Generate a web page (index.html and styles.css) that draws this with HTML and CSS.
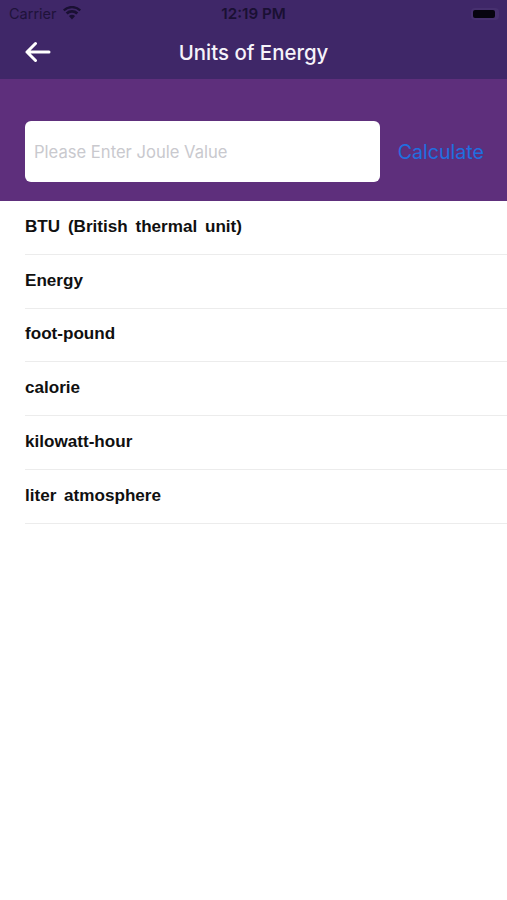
FILE: index.html
```html
<!DOCTYPE html>
<html lang="en">
<head>
<meta charset="utf-8">
<title>Units of Energy</title>
<link rel="stylesheet" href="styles.css">
</head>
<body>
<div class="app">
  <header class="top">
    <div class="status">
      <div class="status-left">
        <span class="carrier">Carrier</span>
        <svg class="wifi" width="18" height="14" viewBox="0 0 18 14"><path d="M9 13.6 L5.9 10.1 A4.6 4.6 0 0 1 12.1 10.1 Z M4.6 8.6 L2.7 6.5 A9.2 9.2 0 0 1 15.3 6.5 L13.4 8.6 A6.4 6.4 0 0 0 4.6 8.6 Z M1.5 5.2 L0 3.5 A13 13 0 0 1 18 3.5 L16.5 5.2 A10.9 10.9 0 0 0 1.5 5.2 Z" fill="#1a1033"/></svg>
      </div>
      <span class="clock">12:19 PM</span>
      <div class="battery"><span class="battery-fill"></span></div>
    </div>
    <div class="nav">
      <svg class="back" width="26" height="22" viewBox="0 0 26 22"><path d="M2 11 H24 M10.5 2.5 L2 11 L10.5 19.5" fill="none" stroke="#fff" stroke-width="3" stroke-linecap="round" stroke-linejoin="round"/></svg>
      <h1 class="title">Units of Energy</h1>
      <span class="nav-spacer"></span>
    </div>
  </header>
  <section class="entry">
    <div class="field">Please Enter Joule Value</div>
    <span class="calc">Calculate</span>
  </section>
  <ul class="list">
    <li class="row"><span class="row-text">BTU (British thermal unit)</span></li>
    <li class="row"><span class="row-text">Energy</span></li>
    <li class="row"><span class="row-text">foot-pound</span></li>
    <li class="row"><span class="row-text">calorie</span></li>
    <li class="row"><span class="row-text">kilowatt-hour</span></li>
    <li class="row"><span class="row-text">liter atmosphere</span></li>
  </ul>
</div>
</body>
</html>
```
FILE: styles.css
```css
* { box-sizing: border-box; }
html, body { margin: 0; padding: 0; background: #fff; }
body { font-family: "Liberation Sans", Arial, sans-serif; }
.app { width: 507px; height: 900px; overflow: hidden; background: #fff; }
.top { height: 79px; background: #3f2768; display: flex; flex-direction: column; }
.status { height: 27px; padding: 0 8px 0 9px; display: flex; align-items: center; position: relative; color: #1a1033; font-size: 14.5px; font-family: Inter, sans-serif; }
.status-left { display: flex; align-items: center; gap: 6px; flex: 1; }
.carrier { opacity: .85; }
.wifi { margin-top: -2px; }
.clock { position: absolute; left: 0; right: 0; text-align: center; font-weight: 600; font-size: 15.2px; }
.battery { width: 28px; height: 12px; border-radius: 4px; padding: 2px; background: #47306f; }
.battery-fill { display: block; width: 22px; height: 8px; border-radius: 2px; background: #07040f; }
.nav { flex: 1; display: grid; grid-template-columns: 1fr auto 1fr; align-items: center; padding-bottom: 2px; }
.back { margin-left: 25px; }
.title { margin: 0; font-family: Inter, sans-serif; font-size: 20.4px; font-weight: 500; color: #f6f3fa; }
.entry { height: 122px; background: #5e2f7c; padding: 42px 23px 20px 25px; display: flex; align-items: flex-start; justify-content: space-between; }
.field { width: 355px; height: 61px; background: #fff; border-radius: 6px; padding: 0 9px; display: flex; align-items: center; font-family: Inter, sans-serif; font-size: 16.6px; color: #c9c9ce; }
.calc { margin-top: 19px; font-family: Inter, sans-serif; font-size: 19.6px; color: #1f6fe0; }
.list { list-style: none; margin: 0; padding: 0 0 0 25px; }
.row { height: 53.8px; padding-bottom: 1px; border-bottom: 1px solid #ececec; display: flex; align-items: center; }
.row-text { font-size: 17.1px; font-weight: 700; color: #101010; word-spacing: 3px; }
```
